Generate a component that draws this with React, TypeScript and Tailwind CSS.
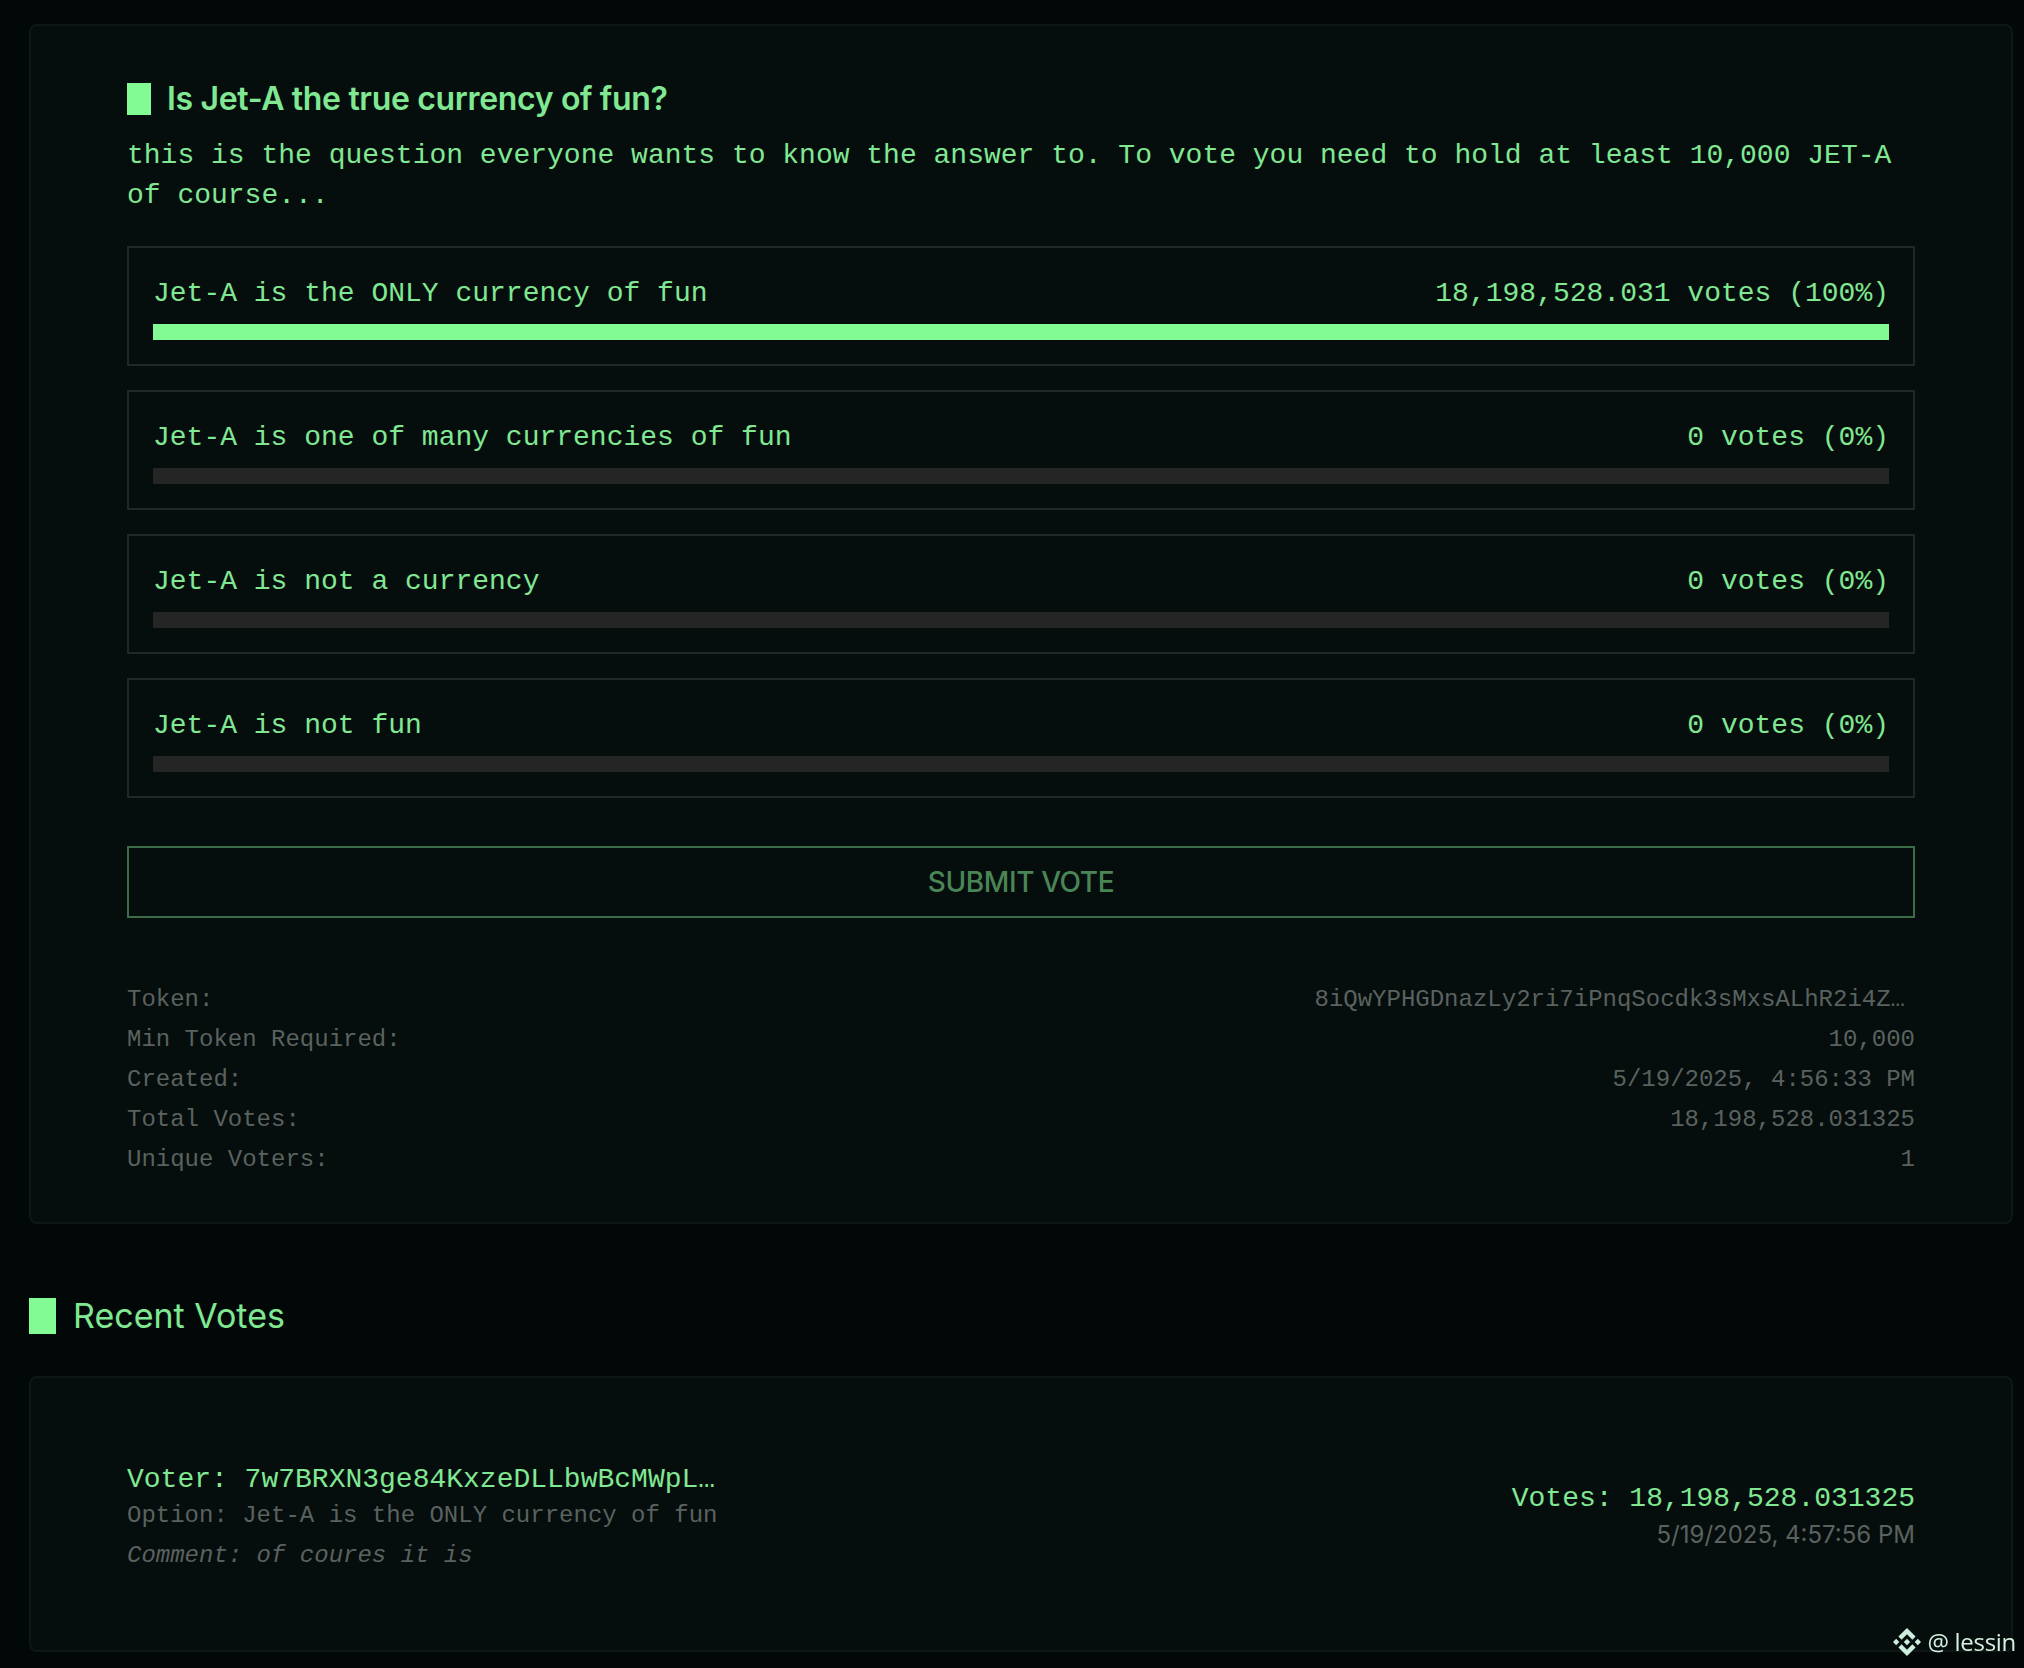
import { SiBinance } from "react-icons/si";

const mono = "font-['Liberation_Mono',monospace]";

const options = [
  { label: "Jet-A is the ONLY currency of fun", votes: "18,198,528.031 votes (100%)", percent: 100 },
  { label: "Jet-A is one of many currencies of fun", votes: "0 votes (0%)", percent: 0 },
  { label: "Jet-A is not a currency", votes: "0 votes (0%)", percent: 0 },
  { label: "Jet-A is not fun", votes: "0 votes (0%)", percent: 0 },
];

const meta = [
  { label: "Token:", value: "8iQwYPHGDnazLy2ri7iPnqSocdk3sMxsALhR2i4Z…", extra: "pr-[10px]" },
  { label: "Min Token Required:", value: "10,000", extra: "" },
  { label: "Created:", value: "5/19/2025, 4:56:33 PM", extra: "" },
  { label: "Total Votes:", value: "18,198,528.031325", extra: "" },
  { label: "Unique Voters:", value: "1", extra: "" },
];

function Option({ label, votes, percent }: { label: string; votes: string; percent: number }) {
  return (
    <div className="border-2 border-[#212626] p-6">
      {/* 2px top padding: Liberation Mono sits higher in its line than the picture's font */}
      <div className="mb-[10px] flex justify-between pt-[2px] text-[28px] leading-10 text-[#80e893]">
        <span>{label}</span>
        <span>{votes}</span>
      </div>
      <div className="h-4 bg-[#252525]">
        <div className="h-full bg-[#82fb94]" style={{ width: `${percent}%` }} />
      </div>
    </div>
  );
}

function Watermark() {
  return (
    <div className="fixed right-2 bottom-[10px] flex items-center gap-[6px] font-['Open_Sans',sans-serif] text-2xl leading-8 font-medium tracking-[-0.3px] text-[#d5f0e0]">
      <SiBinance className="size-7 text-[#cdeedd]" />
      <span>@ lessin</span>
    </div>
  );
}

export default function App() {
  return (
    <div className={`h-[1668px] overflow-hidden bg-[#020808] pt-6 pr-[11px] pl-[29px] ${mono}`}>
      <section className="rounded-lg border-2 border-[#0e1616] bg-[#060d0d] px-24 pt-12 pb-[42px]">
        <h2 className="mb-[11px] flex items-center gap-4 pt-px font-['Inter',sans-serif] text-[32px] leading-12 font-semibold tracking-[-0.34px] text-[#80e893]">
          <span className="-mt-px h-8 w-6 bg-[#82fb94]" />
          Is Jet-A the true currency of fun?
        </h2>
        <p className="mb-[30px] pt-[2px] text-[28px] leading-10 text-[#80e893]">
          this is the question everyone wants to know the answer to. To vote you need to hold at least 10,000 JET-A of course...
        </p>
        <div className="flex flex-col gap-6">
          {options.map((option) => (
            <Option key={option.label} {...option} />
          ))}
        </div>
        <button className="mt-12 h-[72px] w-full border-2 border-[#3c6c47] font-['Inter',sans-serif] text-[28px] font-medium tracking-[-0.4px] text-[#4a8556]">
          SUBMIT VOTE
        </button>
        <dl className="mt-[62px] text-2xl leading-10 text-[#5a625f]">
          {meta.map((row) => (
            <div key={row.label} className="flex justify-between">
              <dt>{row.label}</dt>
              <dd className={row.extra}>{row.value}</dd>
            </div>
          ))}
        </dl>
      </section>

      <h2 className="mt-[68px] mb-9 flex items-center gap-[17px] font-['Inter',sans-serif] text-[34px] leading-12 text-[#80e893]">
        <span className="h-9 w-[27px] bg-[#82fb94]" />
        Recent Votes
      </h2>

      <section className="flex h-[276px] items-center justify-between rounded-lg border-2 border-[#0e1616] bg-[#060d0d] px-24">
        <div className="pt-1">
          <div className="text-[28px] leading-10 text-[#80e893]">Voter: 7w7BRXN3ge84KxzeDLLbwBcMWpL…</div>
          <div className="text-2xl leading-8 text-[#5a625f]">Option: Jet-A is the ONLY currency of fun</div>
          <div className="mt-2 text-2xl leading-8 text-[#5a625f] italic">Comment: of coures it is</div>
        </div>
        <div className="pt-[2px] text-right">
          <div className="text-[28px] leading-10 text-[#80e893]">Votes: 18,198,528.031325</div>
          <div className="font-['Inter',sans-serif] text-2xl leading-8 text-[#5a625f]">5/19/2025, 4:57:56 PM</div>
        </div>
      </section>
      <Watermark />
    </div>
  );
}
